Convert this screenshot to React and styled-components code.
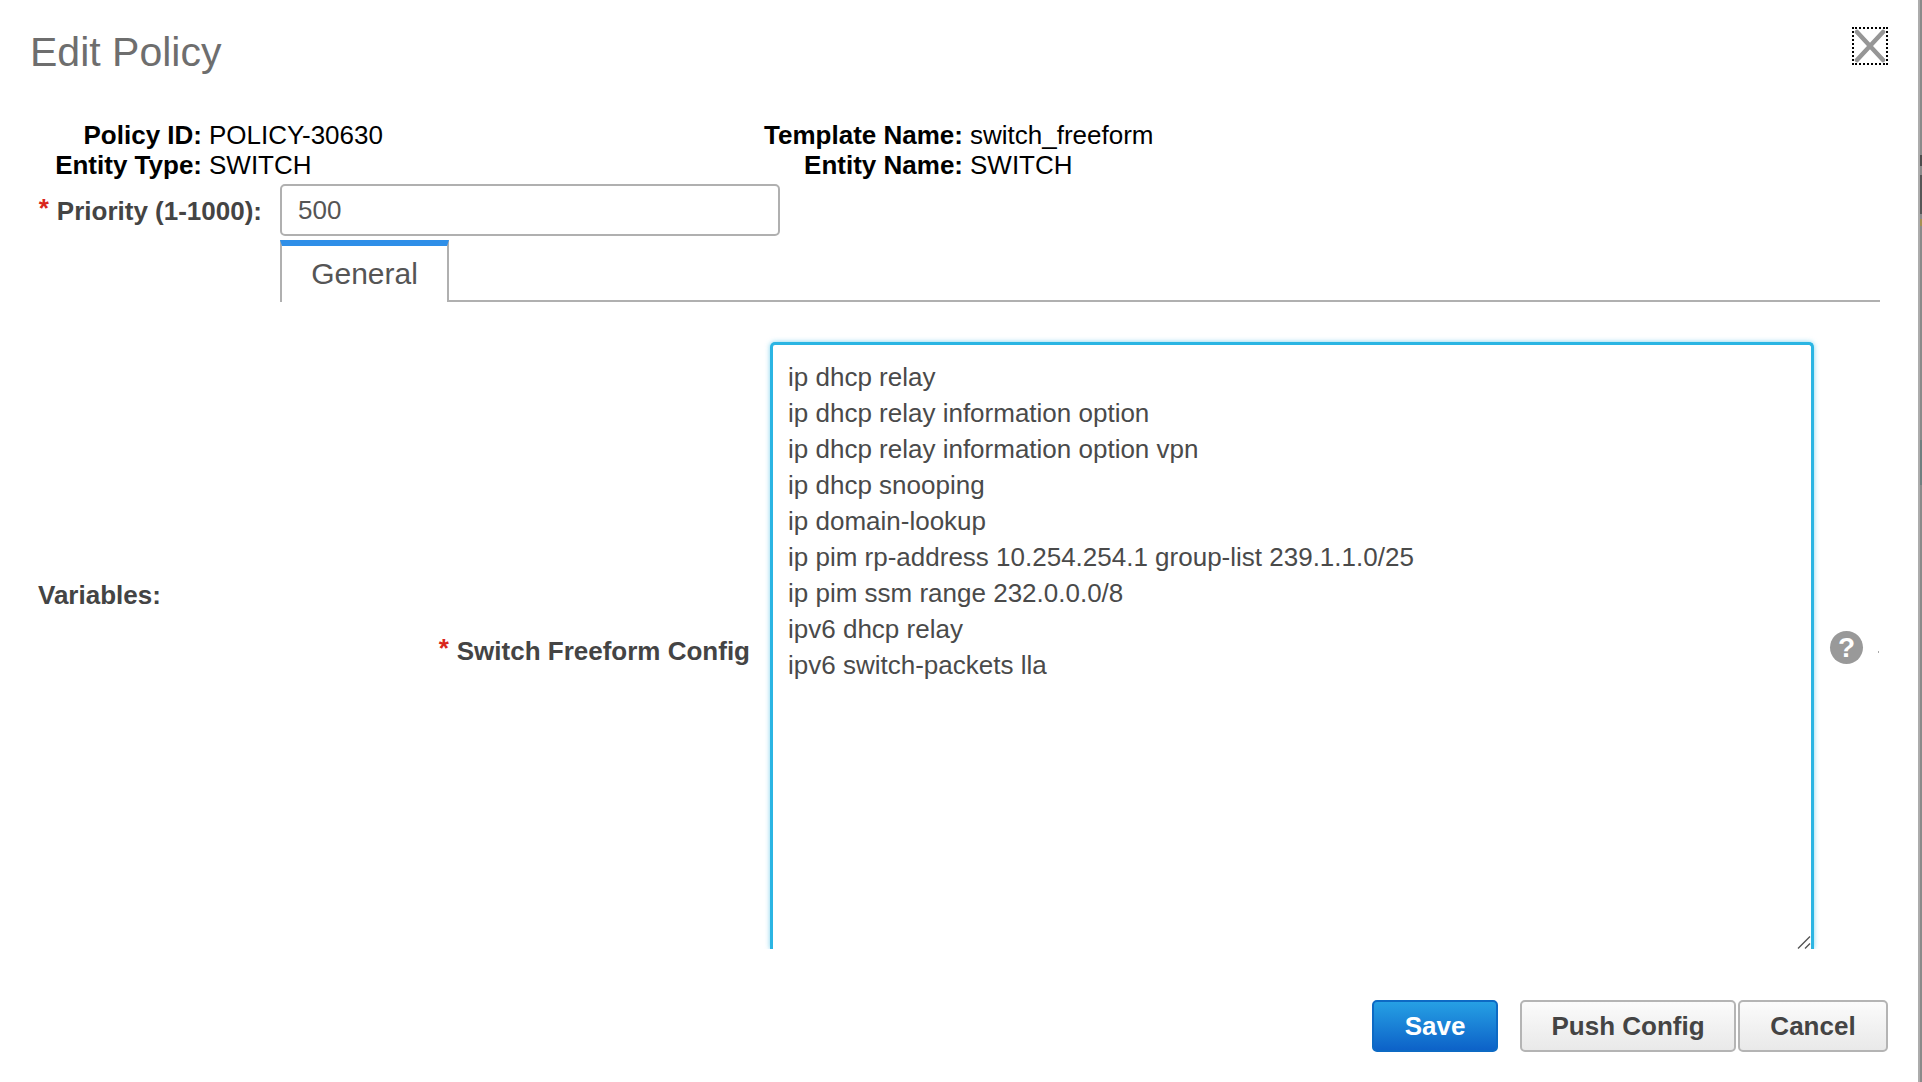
import React from "react";
import styled, { createGlobalStyle } from "styled-components";

const Global = createGlobalStyle`
  html, body { margin: 0; padding: 0; background: #fff; }
  body { font-family: "Liberation Sans", Arial, sans-serif; }
`;

const Page = styled.div`
  width: 1922px;
  height: 1082px;
  overflow: hidden;
  background: #fff;
  display: flex;
  font-size: 26px;
  line-height: 30px;
`;

const Dialog = styled.div`
  width: 1918px;
  display: flex;
  flex-direction: column;
`;

const WindowEdge = styled.div`
  width: 4px;
  background:
    linear-gradient(
      to bottom,
      #8a8a8a 0 155px,
      #4d4d4d 155px 166px,
      #8a8a8a 166px 175px,
      #565656 175px 214px,
      #8a8a8a 214px 219px,
      #a58f52 219px 226px,
      #8a8a8a 226px 440px,
      #6f7f80 440px 485px,
      #8a8a8a 485px
    ) right top / 2px 100% no-repeat,
    #acacac;
`;

const Header = styled.header`
  height: 120px;
  box-sizing: border-box;
  padding: 27px 30px 0 30px;
  display: flex;
  justify-content: space-between;
  align-items: flex-start;
`;

const Title = styled.h1`
  margin: 0;
  font-size: 41px;
  line-height: 50px;
  font-weight: 400;
  color: #6e6e6e;
`;

const CloseButton = styled.button`
  width: 36px;
  height: 38px;
  padding: 0;
  background: transparent;
  border: 2px dotted #000;
  display: flex;
  align-items: center;
  justify-content: center;
`;

const Info = styled.div`
  display: grid;
  grid-template-columns: 209px 381px 380px auto;
  justify-content: start;
  height: 60px;
  color: #000;
`;

const InfoLabel = styled.span`
  font-weight: 700;
  text-align: right;
  margin-right: 7px;
`;

const InfoValue = styled.span`
  white-space: nowrap;
`;

const PriorityRow = styled.div`
  display: grid;
  grid-template-columns: 280px 500px;
  height: 60px;
  padding-top: 4px;
  box-sizing: border-box;
`;

const FieldLabel = styled.label`
  font-weight: 700;
  color: #444;
  text-align: right;
  white-space: nowrap;
`;

const PriorityLabel = styled(FieldLabel)`
  line-height: 54px;
  padding-right: 18px;
`;

const Star = styled.span`
  color: #d9261c;
  margin-right: 8px;
  position: relative;
  top: -3px;
`;

const TextInput = styled.input`
  width: 100%;
  height: 52px;
  box-sizing: border-box;
  border: 2px solid #b0b0b0;
  border-radius: 5px;
  padding: 1px 16px 0 16px;
  font: inherit;
  color: #555;
  outline: none;
`;

const Body = styled.div`
  display: grid;
  grid-template-columns: 280px 1600px;
`;

const VariablesLabel = styled(FieldLabel)`
  text-align: left;
  align-self: center;
  padding-left: 38px;
`;

const TabsColumn = styled.div`
  display: flex;
  flex-direction: column;
`;

const TabBar = styled.div`
  height: 62px;
  box-sizing: border-box;
  border-bottom: 2px solid #b0b0b0;
  display: flex;
`;

const Tab = styled.div`
  width: 169px;
  height: 62px;
  box-sizing: border-box;
  border-top: 6px solid #2f8fe8;
  border-left: 2px solid #b0b0b0;
  border-right: 2px solid #b0b0b0;
  background: #fff;
  color: #555;
  font-size: 30px;
  line-height: 55px;
  text-align: center;
`;

const Panel = styled.div`
  display: grid;
  grid-template-columns: 490px 1044px 66px;
  align-items: center;
  padding-top: 40px;
`;

const ConfigLabel = styled(FieldLabel)`
  padding-right: 20px;
  padding-top: 11px;
`;

const ConfigWrap = styled.div`
  position: relative;
  width: 1044px;
  height: 607px;
`;

const ConfigArea = styled.textarea`
  width: 100%;
  height: 100%;
  box-sizing: border-box;
  border: 3px solid #2bb5e3;
  border-bottom: 0;
  border-radius: 5px 5px 0 0;
  box-shadow: 0 0 5px rgba(43, 181, 227, 0.6);
  clip-path: inset(-8px -8px 0 -8px);
  padding: 14px 15px 0 15px;
  font-family: inherit;
  font-size: 26px;
  line-height: 36px;
  color: #4a4a4a;
  outline: none;
  resize: none;
  overflow: hidden;
  display: block;
`;

const Grip = styled.svg`
  position: absolute;
  right: 3px;
  bottom: 0;
`;

const HelpCell = styled.div`
  display: flex;
  justify-content: flex-end;
  padding-right: 1px;
  padding-top: 4px;
`;

const HelpIcon = styled.span`
  width: 33px;
  height: 33px;
  border-radius: 50%;
  background: #999;
  color: #fff;
  font-size: 28px;
  font-weight: 700;
  line-height: 33px;
  text-align: center;
`;

const Speck = styled.span`
  width: 1px;
  height: 2px;
  margin: 20px 0 0 15px;
  background: #aaa;
`;

const Footer = styled.footer`
  display: flex;
  justify-content: flex-end;
  align-items: center;
  padding: 51px 30px 0 0;
`;

const Button = styled.button`
  height: 52px;
  width: ${(p) => p.$w}px;
  box-sizing: border-box;
  margin-left: ${(p) => p.$ml || 0}px;
  padding: 0;
  border-radius: 5px;
  font-family: inherit;
  font-size: 26px;
  font-weight: 700;
  border: 2px solid ${(p) => (p.$primary ? "#0d6ac4" : "#b4b4b4")};
  color: ${(p) => (p.$primary ? "#fff" : "#444")};
  background: ${(p) =>
    p.$primary
      ? "linear-gradient(#26a0e4, #0d62c8)"
      : "linear-gradient(#fbfbfb, #e9e9e9)"};
`;

const lines = [
  "ip dhcp relay",
  "ip dhcp relay information option",
  "ip dhcp relay information option vpn",
  "ip dhcp snooping",
  "ip domain-lookup",
  "ip pim rp-address 10.254.254.1 group-list 239.1.1.0/25",
  "ip pim ssm range 232.0.0.0/8",
  "ipv6 dhcp relay",
  "ipv6 switch-packets lla",
].join("\n");

export default function App() {
  return (
    <Page>
      <Global />
      <Dialog>
        <Header>
          <Title>Edit Policy</Title>
          <CloseButton aria-label="Close">
            <svg width="32" height="34" viewBox="0 0 32 34">
              <path d="M3 3 L29 31 M29 3 L3 31" stroke="#969696" strokeWidth="4.5" strokeLinecap="round" fill="none" />
            </svg>
          </CloseButton>
        </Header>
        <Info>
          <InfoLabel>Policy ID:</InfoLabel>
          <InfoValue>POLICY-30630</InfoValue>
          <InfoLabel>Template Name:</InfoLabel>
          <InfoValue>switch_freeform</InfoValue>
          <InfoLabel>Entity Type:</InfoLabel>
          <InfoValue>SWITCH</InfoValue>
          <InfoLabel>Entity Name:</InfoLabel>
          <InfoValue>SWITCH</InfoValue>
        </Info>
        <PriorityRow>
          <PriorityLabel><Star>*</Star>Priority (1-1000):</PriorityLabel>
          <TextInput defaultValue="500" />
        </PriorityRow>
        <Body>
          <VariablesLabel>Variables:</VariablesLabel>
          <TabsColumn>
            <TabBar>
              <Tab>General</Tab>
            </TabBar>
            <Panel>
              <ConfigLabel><Star>*</Star>Switch Freeform Config</ConfigLabel>
              <ConfigWrap>
                <ConfigArea defaultValue={lines} spellCheck={false} />
                <Grip width="14" height="13" viewBox="0 0 14 13">
                  <path d="M1 12.5 L13 0.5 M8 12.5 L13 7.5" stroke="#555" strokeWidth="1.4" fill="none" />
                </Grip>
              </ConfigWrap>
              <HelpCell><HelpIcon>?</HelpIcon><Speck /></HelpCell>
            </Panel>
          </TabsColumn>
        </Body>
        <Footer>
          <Button $primary $w={126}>Save</Button>
          <Button $w={216} $ml={22}>Push Config</Button>
          <Button $w={150} $ml={2}>Cancel</Button>
        </Footer>
      </Dialog>
      <WindowEdge />
    </Page>
  );
}
